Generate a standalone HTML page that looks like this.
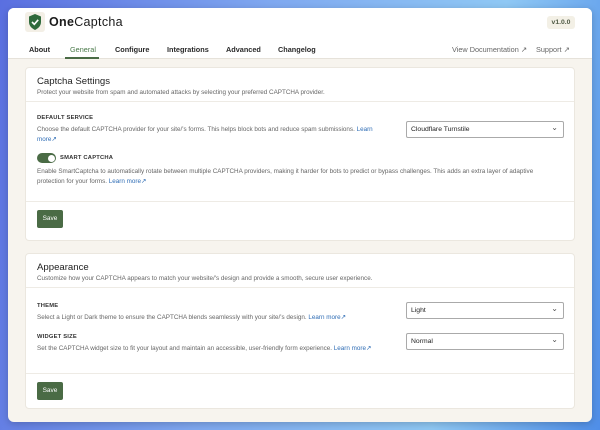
<!DOCTYPE html>
<html><head><meta charset="utf-8"><style>
*{margin:0;padding:0;box-sizing:border-box}
body{width:600px;height:430px;overflow:hidden;font-family:"Liberation Sans",sans-serif;background:linear-gradient(100deg,#5a6fe0 0%,#7fa8f0 40%,#8fc8f4 75%,#4f8ee8 100%);position:relative}
.win{position:absolute;left:8px;top:8px;width:584px;height:414px;background:#f7f4ee;border-radius:6px;overflow:hidden;box-shadow:0 2px 8px rgba(0,0,0,.2)}
.hdr{position:absolute;left:0;top:0;width:584px;height:51px;background:#fff;border-bottom:1px solid #e6e2da}
.a{position:absolute;white-space:nowrap}
.tab{font-size:7.3px;color:#2a2a2a;font-weight:bold;top:37px}
.card{position:absolute;left:17px;width:550px;background:#fff;border:1px solid #ebe7df;border-radius:4px}
.h{font-size:9.6px;color:#222}
.d{font-size:6.3px;color:#666}
.l{font-size:5.8px;font-weight:bold;color:#333;letter-spacing:.2px}
.lk{color:#2f6db5}
.hr{position:absolute;left:0;width:548px;height:1px;background:#eeebe5}
.sel{position:absolute;left:380px;width:158px;height:17px;border:1px solid #aaa;border-radius:2px;font-size:6.8px;color:#222;padding:4px 0 0 4px}
.sel:after{content:"⌄";position:absolute;right:5px;top:1px;font-size:8px;color:#555}
.btn{position:absolute;left:11px;width:26px;height:18px;background:#4a6b45;border-radius:2px;color:#fff;font-size:6.5px;text-align:center;line-height:18px}
</style></head><body>
<div class="win">
<div class="hdr">
<div class="a" style="left:17px;top:4px;width:20px;height:20px;background:#f3efe6;border-radius:3px"></div>
<svg class="a" style="left:19px;top:5px" width="16" height="18" viewBox="0 0 16 18"><path d="M8 1 L14 3.5 V9 C14 13 11 15.5 8 17 C5 15.5 2 13 2 9 V3.5 Z" fill="#2f6a3c"/><path d="M5 9 L7.3 11.3 L11.2 6.8" stroke="#fff" stroke-width="1.6" fill="none"/></svg>
<div class="a" style="left:41px;top:7px;font-size:12.5px;color:#1a1a1a;letter-spacing:.3px"><b>One</b>Captcha</div>
<div class="a" style="left:539px;top:8px;width:28px;height:13px;background:#f3f0e6;border-radius:3px;font-size:6.8px;color:#4f5a45;text-align:center;line-height:13px;font-weight:bold">v1.0.0</div>
<div class="a tab" style="left:21px">About</div>
<div class="a tab" style="left:62px;color:#4a7a4a;font-weight:normal">General</div>
<div class="a" style="left:57px;top:49px;width:34px;height:2px;background:#4a6b45"></div>
<div class="a tab" style="left:107px">Configure</div>
<div class="a tab" style="left:159px">Integrations</div>
<div class="a tab" style="left:218px">Advanced</div>
<div class="a tab" style="left:270px">Changelog</div>
<div class="a tab" style="left:444px;color:#666;font-weight:normal">View Documentation ↗</div>
<div class="a tab" style="left:528px;color:#666;font-weight:normal">Support ↗</div>
</div>

<div class="card" style="top:59px;height:174px">
<div class="a h" style="left:11px;top:8px">Captcha Settings</div>
<div class="a d" style="left:11px;top:21px">Protect your website from spam and automated attacks by selecting your preferred CAPTCHA provider.</div>
<div class="hr" style="top:33px"></div>
<div class="a l" style="left:11px;top:47px">DEFAULT SERVICE</div>
<div class="a d" style="left:11px;top:58px">Choose the default CAPTCHA provider for your site/'s forms. This helps block bots and reduce spam submissions. <span class="lk">Learn</span></div>
<div class="a d" style="left:11px;top:68px"><span class="lk">more↗</span></div>
<div class="sel" style="top:53px">Cloudflare Turnstile</div>
<div class="a" style="left:11px;top:85px;width:19px;height:10px;background:#4a6b45;border-radius:5px"><div style="position:absolute;right:1.5px;top:1.5px;width:7px;height:7px;background:#fff;border-radius:50%"></div></div>
<div class="a l" style="left:34px;top:87px">SMART CAPTCHA</div>
<div class="a d" style="left:11px;top:100px">Enable SmartCaptcha to automatically rotate between multiple CAPTCHA providers, making it harder for bots to predict or bypass challenges. This adds an extra layer of adaptive</div>
<div class="a d" style="left:11px;top:110px">protection for your forms. <span class="lk">Learn more↗</span></div>
<div class="hr" style="top:133px"></div>
<div class="btn" style="top:142px">Save</div>
</div>

<div class="card" style="top:245px;height:156px">
<div class="a h" style="left:11px;top:8px">Appearance</div>
<div class="a d" style="left:11px;top:21px">Customize how your CAPTCHA appears to match your website/'s design and provide a smooth, secure user experience.</div>
<div class="hr" style="top:33px"></div>
<div class="a l" style="left:11px;top:49px">THEME</div>
<div class="a d" style="left:11px;top:60px">Select a Light or Dark theme to ensure the CAPTCHA blends seamlessly with your site/'s design. <span class="lk">Learn more↗</span></div>
<div class="sel" style="top:48px">Light</div>
<div class="a l" style="left:11px;top:80px">WIDGET SIZE</div>
<div class="a d" style="left:11px;top:91px">Set the CAPTCHA widget size to fit your layout and maintain an accessible, user-friendly form experience. <span class="lk">Learn more↗</span></div>
<div class="sel" style="top:79px">Normal</div>
<div class="hr" style="top:119px"></div>
<div class="btn" style="top:128px">Save</div>
</div>
</div>
</body></html>
